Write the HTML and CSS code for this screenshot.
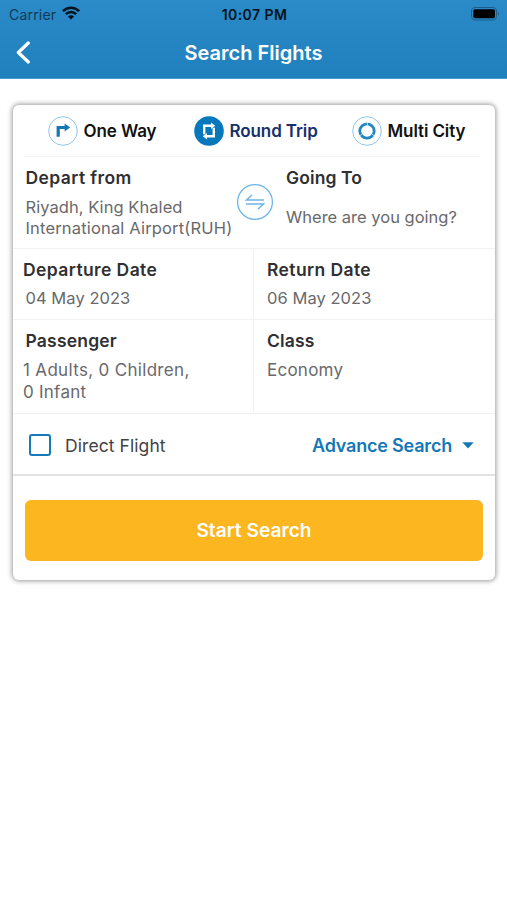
FILE: index.html
```html
<!DOCTYPE html>
<html lang="en">
<head>
<meta charset="utf-8">
<title>Search Flights</title>
<link rel="stylesheet" href="styles.css">
</head>
<body>
<header class="header">
  <div class="status">
    <div class="carrier"><span>Carrier</span>
      <svg width="18" height="14" viewBox="0 0 18 14" fill="none" stroke="#04121d" stroke-width="2.5"><path d="M.9 5.1C5.5.5 12.500.5 17.100 5.100M3.800 8.200c3-3 7.400-3 10.400 0"/><path d="M5.900 10.500c1.800-1.700 4.400-1.700 6.200 0L9 13.600z" fill="#04121d" stroke="none"/></svg>
    </div>
    <span class="time">10:07 PM</span>
    <svg class="battery" width="30" height="14" viewBox="0 0 30 14"><rect x=".5" y=".5" width="25" height="12.500" rx="3.500" fill="none" stroke="#1b5d88"/><rect x="2.300" y="2.200" width="21.700" height="9" rx="1.800" fill="#000"/><path d="M27 4.800q2 2 0 4z" fill="#1b5d88"/></svg>
  </div>
  <div class="nav">
    <svg class="back" width="16" height="24" viewBox="0 0 16 24" fill="none" stroke="#fff" stroke-width="3.200" stroke-linecap="round" stroke-linejoin="round"><path d="M13.300 2 3.300 11.500l10 9.500"/></svg>
    <h1>Search Flights</h1>
  </div>
</header>
<main class="card">
  <nav class="tabs">
    <div class="tab one"><svg width="30" height="30" viewBox="0 0 30 30"><circle cx="15" cy="15" r="14.300" fill="#fff" stroke="#8fc6ec"/><path d="M10.200 20.800V11.500h7" fill="none" stroke="#1677b5" stroke-width="3.200"/><path d="m16.600 7.500 5.600 4-5.600 4z" fill="#1677b5"/></svg><span>One Way</span></div>
    <div class="tab round"><svg width="30" height="30" viewBox="0 0 30 30"><circle cx="15" cy="15" r="14.800" fill="#0878bd"/><path d="M10.200 18.200V9.800h8M19.800 11.800v8.400h-8" fill="none" stroke="#fff" stroke-width="2.400"/><path d="m17 6.600 4.200 3.200-4.200 3.200zM13 17l-4.200 3.200 4.200 3.200z" fill="#fff"/></svg><span>Round Trip</span></div>
    <div class="tab multi"><svg width="30" height="30" viewBox="0 0 30 30"><circle cx="15" cy="15" r="14.300" fill="#fff" stroke="#8fc6ec"/><circle cx="15" cy="15" r="7.200" fill="none" stroke="#2185c2" stroke-width="2.800"/><path d="m15 6 .7 3.300M7.400 20.200l2.400-2M22.600 20.200l-2.400-2" stroke="#fff" stroke-width=".7"/></svg><span>Multi City</span></div>
  </nav>
  <section class="route">
    <div class="from"><h2 class="t-depart">Depart from</h2><p>Riyadh, King Khaled<br><span class="t-airport">International Airport(RUH)</span></p></div>
    <svg class="swap" width="38" height="38" viewBox="0 0 38 38" fill="none" stroke="#6db5e9"><circle cx="19" cy="19" r="17.400" stroke-width="1.300"/><path d="M28 17H10.500l5.500-5M10 21h17.500L22 26" stroke-width="1.500"/></svg>
    <div class="to"><h2 class="t-going">Going To</h2><p>Where are you going?</p></div>
  </section>
  <section class="row dates">
    <div class="cell left"><h2>Departure Date</h2><p class="inset">04 May 2023</p></div>
    <div class="cell"><h2>Return Date</h2><p>06 May 2023</p></div>
  </section>
  <section class="row travel">
    <div class="cell left"><h2 class="inset t-pass">Passenger</h2><p><span class="t-adults">1 Adults, 0 Children,</span><br>0 Infant</p></div>
    <div class="cell"><h2 class="t-class">Class</h2><p>Economy</p></div>
  </section>
  <section class="options">
    <label class="direct"><span class="box"></span><span>Direct Flight</span></label>
    <div class="advance"><span>Advance Search</span><svg width="12" height="7" viewBox="0 0 12 7"><path d="M.3.300h11.400L6 6.500z" fill="#1478b8"/></svg></div>
  </section>
  <div class="submit"><button>Start Search</button></div>
</main>
</body>
</html>
```
FILE: styles.css
```css
* { box-sizing: border-box; }
body { margin: 0; min-height: 100vh; background: #fff; font-family: Inter, "Liberation Sans", sans-serif; color: #303032; }
h1, h2, p { margin: 0; white-space: nowrap; }
svg { display: block; flex: none; }
.header { height: 79px; background: linear-gradient(#2a8bc8, #1f80bd); border-bottom: 1px solid #4a9bce; }
.status { height: 27px; display: grid; grid-template-columns: 1fr auto 1fr; align-items: center; padding: 1px 7px 0 9px; color: #04121d; font-size: 14px; }
.carrier { display: flex; align-items: center; gap: 6px; color: #123a56; letter-spacing: .2px; }
.carrier svg { margin-top: -2px; }
.time { font-weight: 600; letter-spacing: .45px; }
.battery { justify-self: end; margin-right: -1px; }
.nav { height: 51px; display: grid; grid-template-columns: 100px 1fr 100px; align-items: center; padding: 0 15px; }
h1 { font-size: 20px; line-height: 24px; font-weight: 600; color: #fff; text-align: center; }
.card { margin: 26px 12px 0 13px; height: 475px; border-radius: 6px; background: #fff; box-shadow: 0 0 5px 1px rgba(0,0,0,.4); }
.tabs { height: 52px; margin: 0 15px 0 11px; border-bottom: 1px solid #f2f2f2; display: flex; align-items: center; padding-left: 24px; }
.tab { display: flex; align-items: center; gap: 5.5px; font-size: 17px; font-weight: 600; letter-spacing: -.1px; color: #111; white-space: nowrap; }
.one { width: 146px; }
.round { width: 158px; color: #17306b; }
h2 { font-size: 17.5px; line-height: 22px; font-weight: 600; letter-spacing: .4px; }
.t-going { letter-spacing: .1px; }
.t-class { letter-spacing: .15px; }
.t-pass { letter-spacing: .2px; }
p { font-size: 16.5px; line-height: 21px; color: #69696b; letter-spacing: .05px; }
.t-airport { letter-spacing: .17px; }
.route { height: 92px; border-bottom: 1px solid #f1f1f1; display: grid; grid-template-columns: 210px 38px 1fr; padding: 10px 0 0 12.5px; }
.from p { margin-top: 8px; }
.swap { margin-top: 16px; }
.to { padding-left: 12.5px; }
.to p { margin-top: 18px; letter-spacing: 0; }
.row { display: grid; grid-template-columns: 241px 1fr; border-bottom: 1px solid #f1f1f1; }
.cell { padding: 10px 0 0 13px; }
.cell.left { padding-left: 10px; border-right: 1px solid #f1f1f1; }
.cell p { margin-top: 7px; }
.cell .inset { padding-left: 2.5px; }
.dates { height: 71px; }
.travel { height: 94px; }
.travel .cell p { font-size: 17px; line-height: 22px; letter-spacing: .25px; }
.travel .t-adults { letter-spacing: .32px; }
.options { height: 62px; border-bottom: 2px solid #e2e2e2; display: flex; align-items: center; justify-content: space-between; padding: 2px 21px 0 16px; }
.direct { display: flex; align-items: center; gap: 14px; font-size: 17.5px; letter-spacing: .08px; color: #434345; }
.box { width: 22px; height: 22px; border: 2px solid #1679b9; border-radius: 3px; }
.advance { display: flex; align-items: center; gap: 10px; font-size: 18px; font-weight: 600; letter-spacing: -.2px; color: #1478b8; }
.submit { padding: 24px 12px 0; }
button { display: block; width: 100%; height: 61px; border: 0; border-radius: 6px; background: #fcb61f; color: #fff; font: 600 19px/61px Inter, "Liberation Sans", sans-serif; letter-spacing: .1px; padding: 0; }
```
